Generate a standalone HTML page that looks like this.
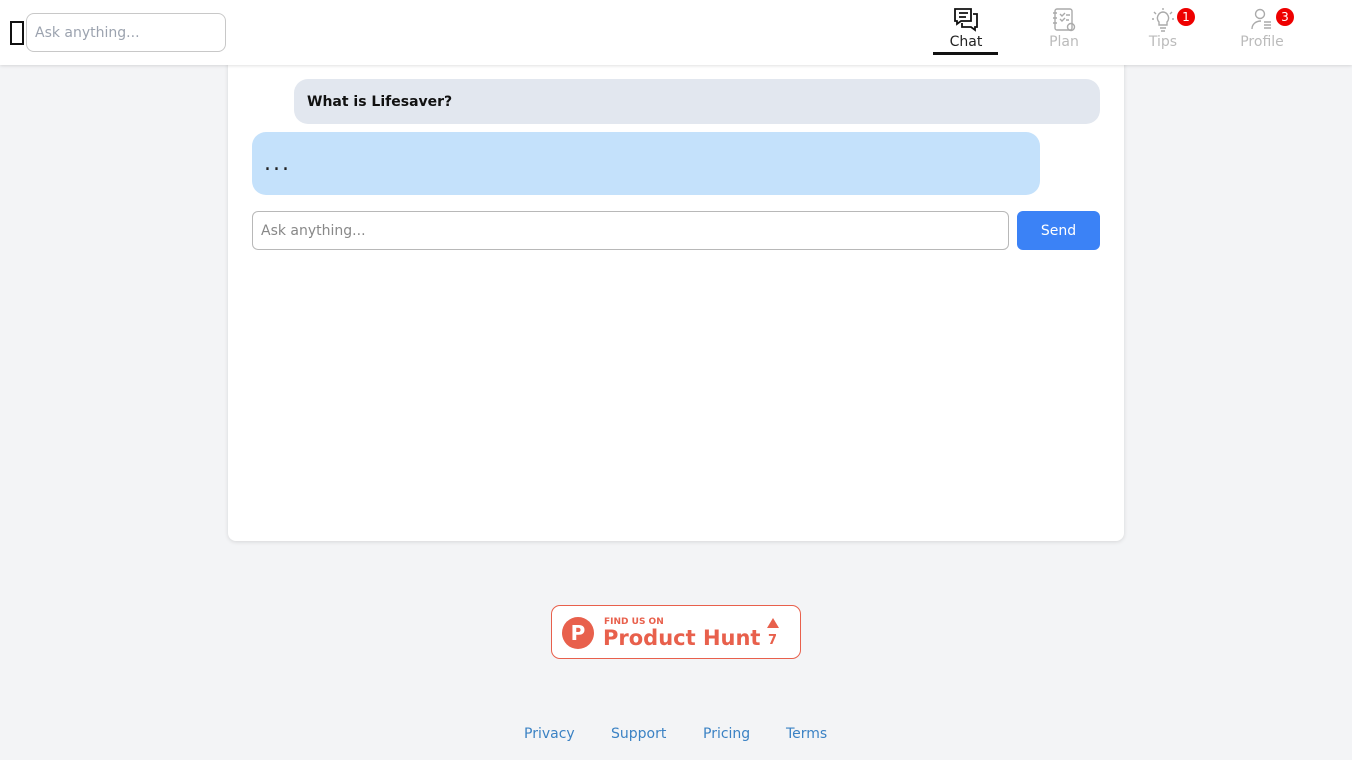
<!DOCTYPE html>
<html><head><meta charset="utf-8">
<style>
*{box-sizing:border-box;margin:0;padding:0}
body{width:1352px;height:760px;background:#f3f4f6;font-family:"DejaVu Sans","Liberation Sans",sans-serif;position:relative;overflow:hidden}
.top{position:absolute;left:0;top:0;width:1352px;height:65px;background:#fff;box-shadow:0 1px 3px rgba(0,0,0,.12);z-index:2}
.box{position:absolute;left:10px;top:21px;width:14px;height:24px;border:2px solid #111}
.s1{position:absolute;left:26px;top:13px;width:200px;height:39px;border:1px solid #c8c8c8;border-radius:8px;padding:0 8px;line-height:39px;font-size:14px;color:#9ca3af}
.nav{position:absolute;top:0;width:66px;height:56px;text-align:center;font-size:14px;color:#bbb}
.nav svg{position:absolute;left:20px;top:7px}
.nav span{position:absolute;left:0;right:0;top:34px}
.badge{position:absolute;top:8px;width:18px;height:18px;border-radius:50%;background:#e00;color:#fff;font-size:12px;line-height:18px;text-align:center}
.card{position:absolute;left:228px;top:60px;width:896px;height:481px;background:#fff;border-radius:0 0 8px 8px;box-shadow:0 1px 4px rgba(0,0,0,.12)}
.q{position:absolute;left:294px;top:79px;width:806px;height:45px;background:#e2e7ef;border-radius:14px;font-weight:bold;font-size:14px;line-height:47px;padding-left:13px;color:#111}
.a{position:absolute;left:252px;top:132px;width:788px;height:63px;background:#c4e1fb;border-radius:14px;font-size:22px;padding-left:12px;line-height:63px;color:#222;letter-spacing:2px}
.in{position:absolute;left:252px;top:211px;width:757px;height:39px;border:1px solid #b8b8b8;border-radius:6px;padding-left:8px;line-height:39px;font-size:14px;color:#888}
.send{position:absolute;left:1017px;top:211px;width:83px;height:39px;background:#3b82f6;border-radius:6px;color:#fff;font-size:14px;text-align:center;line-height:40px}
.ph{position:absolute;left:551px;top:605px;width:250px;height:54px;border:1px solid #e8604c;border-radius:9px;background:#fff;color:#e8604c}
.links{position:absolute;top:726px;font-size:14px;color:#3b82c4}
</style></head><body>
<div class="top">
<div class="box"></div>
<div class="s1">Ask anything...</div>
<div class="nav" style="left:933px;color:#222">
<svg width="26" height="26" viewBox="0 0 26 26" fill="none" stroke="#111" stroke-width="1.8"><path d="M2 2h16v12H8l-4 3v-3H2z"/><path d="M20 7h4v13h-2v3l-4-3H9v-4"/><path d="M6 6h9M6 10h7"/></svg>
<span>Chat</span>
<div style="position:absolute;left:0;top:52px;width:65px;height:3px;background:#111"></div></div>
<div class="nav" style="left:1031px"><svg width="26" height="26" viewBox="0 0 26 26" fill="none" stroke="#aaa" stroke-width="1.4"><rect x="4" y="2" width="17" height="21" rx="2"/><path d="M2 6h4M2 11h4M2 16h4M9 7l2 2 3-3M9 12l2 2 3-3M15 8h4M15 13h3"/><circle cx="20" cy="20" r="3.5"/></svg><span>Plan</span></div>
<div class="nav" style="left:1130px"><svg width="26" height="26" viewBox="0 0 26 26" fill="none" stroke="#aaa" stroke-width="1.4"><path d="M13 5a6 6 0 0 0-4 10v3h8v-3a6 6 0 0 0-4-10zM10 21h6M11 24h4M13 1v2M4 5l2 2M22 5l-2 2M2 12h2M22 12h2"/></svg><span>Tips</span></div>
<div class="badge" style="left:1177px">1</div>
<div class="nav" style="left:1229px"><svg width="26" height="26" viewBox="0 0 26 26" fill="none" stroke="#aaa" stroke-width="1.4"><circle cx="11" cy="7" r="4.5"/><path d="M3 22c0-5 4-8 9-8M15 15h7M15 18h7M15 21h7"/></svg><span>Profile</span></div>
<div class="badge" style="left:1276px">3</div>
</div>
<div class="card"></div>
<div class="q">What is Lifesaver?</div>
<div class="a">...</div>
<div class="in">Ask anything...</div>
<div class="send">Send</div>
<div class="ph">
<div style="position:absolute;left:10px;top:11px;width:32px;height:32px;border-radius:50%;background:#e8604c;color:#fff;font-weight:bold;font-size:20px;text-align:center;line-height:32px">P</div>
<div style="position:absolute;left:52px;top:11px;font-size:9px;font-weight:bold">FIND US ON</div>
<div style="position:absolute;left:51px;top:20px;font-size:21px;font-weight:bold">Product Hunt</div>
<div style="position:absolute;left:215px;top:12px;width:0;height:0;border-left:6px solid transparent;border-right:6px solid transparent;border-bottom:10px solid #e8604c"></div>
<div style="position:absolute;left:216px;top:27px;font-size:13px;font-weight:bold">7</div>
</div>
<div class="links" style="left:524px">Privacy</div>
<div class="links" style="left:611px">Support</div>
<div class="links" style="left:703px">Pricing</div>
<div class="links" style="left:786px">Terms</div>
</body></html>
